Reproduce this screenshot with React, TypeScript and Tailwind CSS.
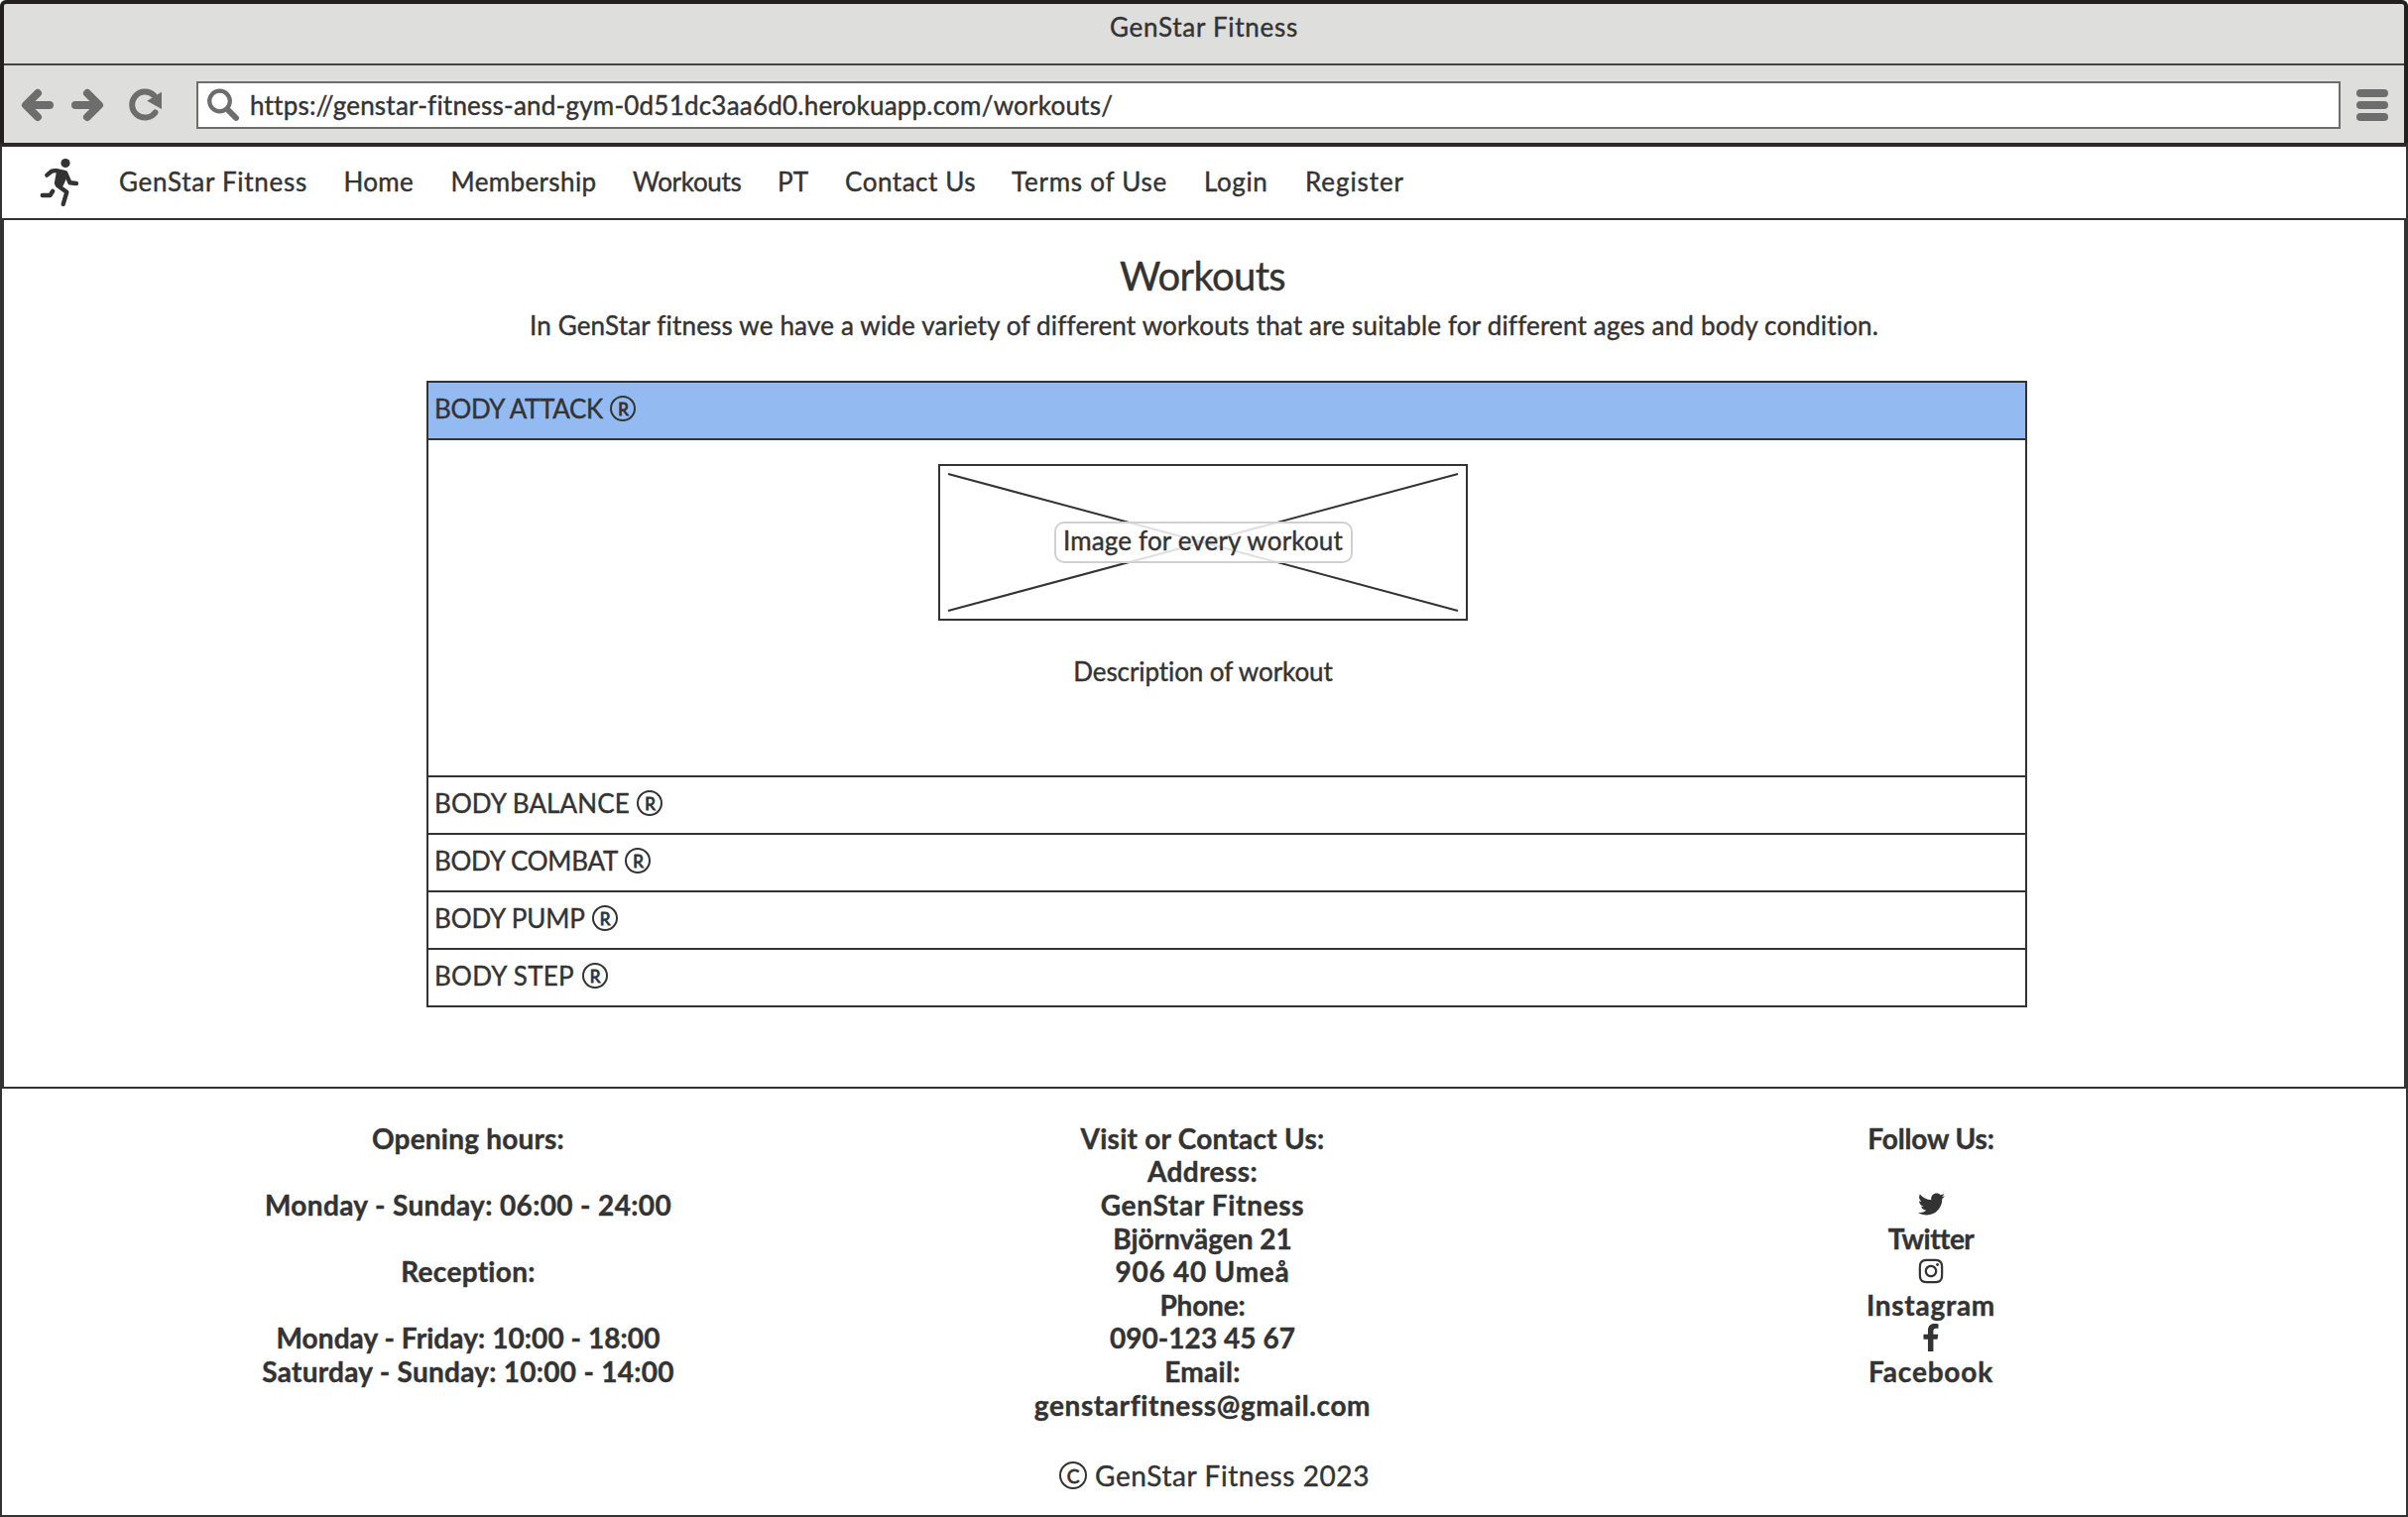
import { FaFacebookF, FaInstagram, FaTwitter } from "react-icons/fa";
import type { ReactNode } from "react";

const navItems = [
  { label: "GenStar Fitness", style: "w-[226.5px] tracking-[0.72px]" },
  { label: "Home", style: "w-[108px] tracking-[0.3px]" },
  { label: "Membership", style: "w-[183.5px] tracking-[0.39px]" },
  { label: "Workouts", style: "w-[146px] tracking-[-0.3px]" },
  { label: "PT", style: "w-[68px] tracking-[0.2px]" },
  { label: "Contact Us", style: "w-[168px] tracking-[0.54px]" },
  { label: "Terms of Use", style: "w-[194px] tracking-[0.76px]" },
  { label: "Login", style: "w-[102px] tracking-[0.6px]" },
  { label: "Register", style: "w-[102px] tracking-[0.92px]" },
];

const workouts = [
  { label: "BODY BALANCE", style: "w-[204px] tracking-[0.1px]" },
  { label: "BODY COMBAT", style: "w-[192px] tracking-[-0.25px]" },
  { label: "BODY PUMP", style: "w-[158.5px] tracking-[-0.1px]" },
  { label: "BODY STEP", style: "w-[148.5px] tracking-[0.3px]" },
];

function Registered() {
  return (
    <span className="flex size-[26px] items-center justify-center rounded-full border-2 border-[#333] pl-px text-[17px] leading-none [-webkit-text-stroke:0.9px_#333]">
      R
    </span>
  );
}

function RowTitle({ label, style }: { label: string; style: string }) {
  return (
    <div className="flex h-[56px] items-center pb-1 pl-[6px]">
      <span className={style}>{label}</span>
      <Registered />
    </div>
  );
}

function Line({ className = "", children }: { className?: string; children?: ReactNode }) {
  return <div className={`flex h-[33.6px] items-center justify-center ${className}`}>{children}</div>;
}

function BrowserChrome() {
  return (
    <header className="rounded-t-[6px] border-4 border-b-0 border-[#231f20] bg-[#dededc]">
      <div className="h-[62px] border-b-2 border-[#444] text-center leading-[46px] tracking-[0.72px]">
        GenStar Fitness
      </div>
      <div className="flex h-[78px] items-center pt-[2px] text-[#6d6d6d]">
        <svg className="ml-[14px] h-[40px] w-[150px]" viewBox="18 86 150 40" fill="none" stroke="currentColor" strokeLinecap="round" strokeLinejoin="round">
          <path d="M38 94 26 106 38 118M27 106H50" strokeWidth="8" />
          <path d="M88 94 100 106 88 118M76 106H99" strokeWidth="8" />
          <path d="M156.5 113.5A13 13 0 1 1 155.5 96.5" strokeWidth="6" />
          <path d="M148.3 101.7 163 92.7V110Z" fill="currentColor" stroke="none" />
        </svg>
        <div className="ml-[30px] flex h-[48px] w-[2162px] items-center border-2 border-[#6d6d6d] bg-white">
          <svg className="ml-[6px] h-[36px] w-[36px]" viewBox="206 88 36 36" fill="none" stroke="currentColor" strokeLinecap="round">
            <circle cx="221.5" cy="102" r="10.3" strokeWidth="4.2" />
            <path d="M229.5 110.5 238 119" strokeWidth="6" />
          </svg>
          <span className="ml-[10px] tracking-[0.22px] text-[#333]">
            https://genstar-fitness-and-gym-0d51dc3aa6d0.herokuapp.com/workouts/
          </span>
        </div>
        <div className="ml-4 flex w-8 flex-col gap-1">
          <i className="h-2 rounded bg-current" />
          <i className="h-2 rounded bg-current" />
          <i className="h-2 rounded bg-current" />
        </div>
      </div>
    </header>
  );
}

function Runner() {
  return (
    <svg className="ml-[36px] h-[52px] w-[44px]" viewBox="38 158 44 52" fill="none" stroke="#333" strokeWidth="4.4" strokeLinecap="round" strokeLinejoin="round">
      <circle cx="66" cy="164.5" r="4.6" fill="#333" stroke="none" />
      <path d="M47.3 176.6 52 172.8Q54 171.8 57 172.2L66 174.2 70.5 184.3 77 185" />
      <path d="M59 174 66 176.5 62 186 57 185Z" fill="#333" />
      <path d="M58 187 67.3 193.8 63.7 206" />
      <path d="M42.8 197H50.5L53.2 192.8" />
    </svg>
  );
}

export default function App() {
  return (
    <div
      className="flex h-[1530px] w-[2428px] flex-col bg-white text-[26px] leading-none whitespace-nowrap text-[#333] [-webkit-text-stroke:0.4px_#333]"
      style={{ fontFamily: "Lato, 'Open Sans', sans-serif" }}
    >
      <BrowserChrome />

      <nav className="flex h-[78px] items-center border-2 border-t-4 border-[#333] border-t-[#2b282a]">
        <div className="flex items-center">
          <Runner />
          <div className="ml-[38px] flex pb-[3px]">
            {navItems.map((n) => (
              <span key={n.label} className={n.style}>
                {n.label}
              </span>
            ))}
          </div>
        </div>
      </nav>

      <main className="flex h-[874px] flex-col items-center border-x-4 border-[#333]">
        <h1 className="mt-[36px] mr-[3px] h-[40px] text-[40px] leading-[40px] tracking-[-0.65px]">Workouts</h1>
        <p className="mt-[14px] h-[32px] leading-[32px] tracking-[0.18px]">
          In GenStar fitness we have a wide variety of different workouts that are suitable for different ages and body condition.
        </p>

        <section className="mt-[40px] ml-[46px] flex w-[1614px] flex-col divide-y-2 divide-[#333] border-2 border-[#333]">
          <div className="bg-[#94baf2]">
            <RowTitle label="BODY ATTACK" style="w-[177px] tracking-[-0.34px]" />
          </div>
          <div className="flex h-[340px] flex-col items-center pr-[48px]">
            <div className="relative mt-6 flex h-[158px] w-[534px] shrink-0 items-center justify-center border-2 border-[#333]">
              <svg className="absolute inset-0 h-full w-full" viewBox="0 0 530 154" stroke="#333" strokeWidth="2">
                <path d="M8 8 522 146M8 146 522 8" />
              </svg>
              <div className="relative flex h-[42px] w-[301px] items-center justify-center rounded-[10px] border-2 border-[#d0d0d0] bg-white/85 pb-[5px] tracking-[0.17px]">
                Image for every workout
              </div>
            </div>
            <p className="mt-[36px] leading-[30px] tracking-[-0.08px]">Description of workout</p>
          </div>
          {workouts.map((w) => (
            <div key={w.label}>
              <RowTitle label={w.label} style={w.style} />
            </div>
          ))}
        </section>
      </main>

      <footer className="h-[434px] border-2 border-[#333] pt-[33px]">
        <div className="flex h-[318px] text-[28px] font-bold [-webkit-text-stroke:0.4px_#333]">
          <div className="w-[943px] pr-[3px]">
            <Line className="tracking-[0.21px]">Opening hours:</Line>
            <Line />
            <Line className="tracking-[0.36px]">Monday - Sunday: 06:00 - 24:00</Line>
            <Line />
            <Line className="tracking-[0.3px]">Reception:</Line>
            <Line />
            <Line className="tracking-[0.07px]">Monday - Friday: 10:00 - 18:00</Line>
            <Line className="tracking-[0.27px]">Saturday - Sunday: 10:00 - 14:00</Line>
          </div>
          <div className="w-[535px]">
            <Line className="tracking-[0.25px]">Visit or Contact Us:</Line>
            <Line className="tracking-[0.41px]">Address:</Line>
            <Line className="tracking-[0.67px]">GenStar Fitness</Line>
            <Line>Björnvägen 21</Line>
            <Line className="tracking-[0.75px]">906 40 Umeå</Line>
            <Line className="tracking-[-0.19px]">Phone:</Line>
            <Line className="tracking-[0.04px]">090-123 45 67</Line>
            <Line className="tracking-[0.3px]">Email:</Line>
            <Line className="tracking-[0.59px]">genstarfitness@gmail.com</Line>
          </div>
          <div className="w-[934px]">
            <Line className="tracking-[-0.13px]">Follow Us:</Line>
            <Line />
            <Line>
              <FaTwitter className="size-[27px]" />
            </Line>
            <Line className="tracking-[-0.49px]">Twitter</Line>
            <Line>
              <FaInstagram className="size-[28px]" />
            </Line>
            <Line className="tracking-[0.72px]">Instagram</Line>
            <Line>
              <FaFacebookF className="size-[28px]" />
            </Line>
            <Line className="tracking-[0.82px]">Facebook</Line>
          </div>
        </div>
        <div className="mt-[25px] ml-[1066px] flex h-7 items-center text-[28px] tracking-[0.6px]">
          <span className="mr-[8px] flex size-7 items-center justify-center rounded-full border-2 border-[#333] pl-px text-[19px] leading-none [-webkit-text-stroke:0.8px_#333]">
            C
          </span>
          GenStar Fitness 2023
        </div>
      </footer>
    </div>
  );
}
